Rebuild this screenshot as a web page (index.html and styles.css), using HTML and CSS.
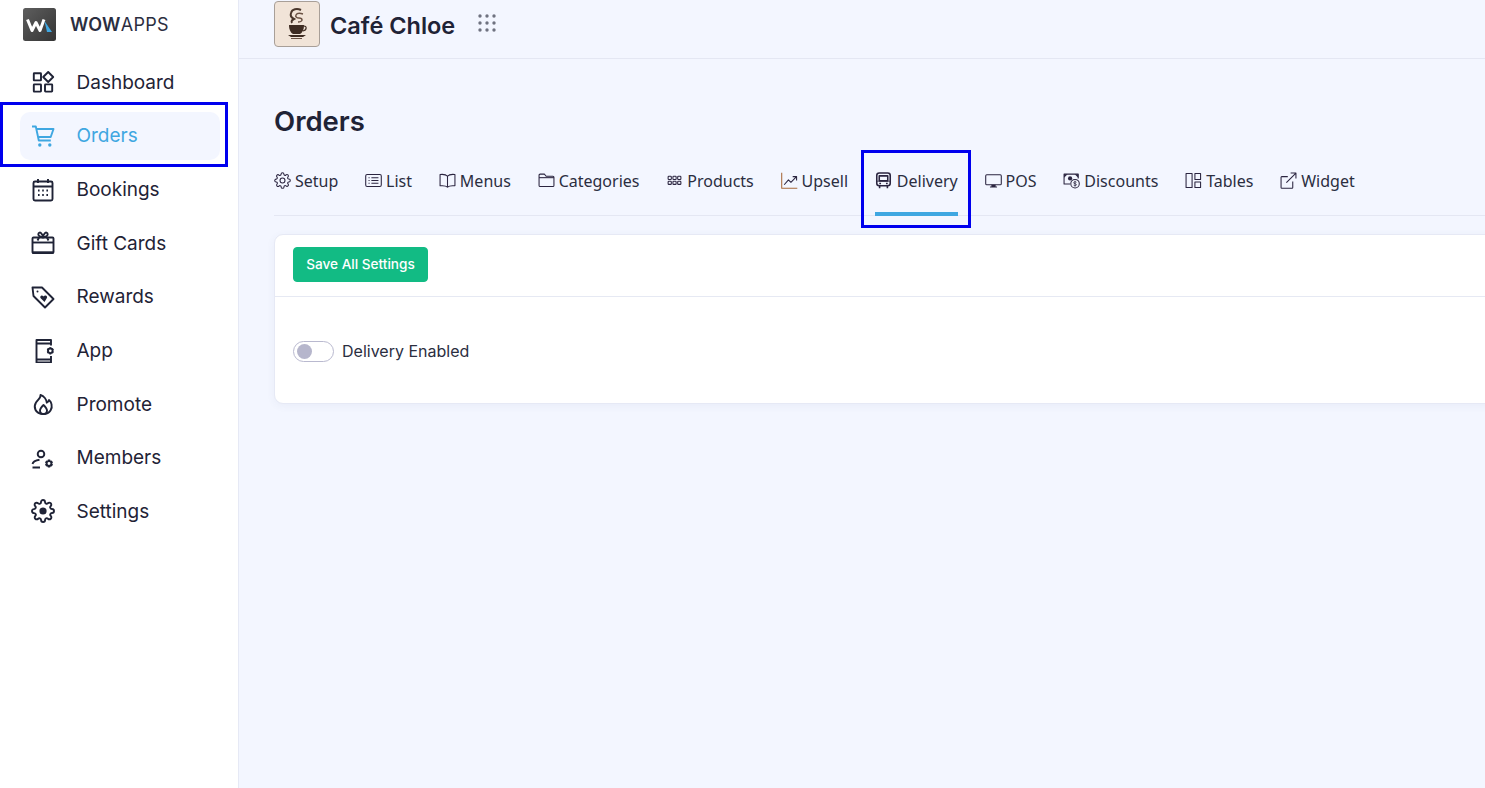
FILE: index.html
```html
<!DOCTYPE html>
<html lang="en">
<head>
<meta charset="utf-8">
<title>Orders - Delivery</title>
<link rel="stylesheet" href="styles.css">
</head>
<body>
<svg class="defs" width="0" height="0">
  <symbol id="gear" viewBox="0 0 24 24"><path d="M19.4 15a1.65 1.65 0 0 0 .33 1.82l.06.06a2 2 0 0 1 0 2.83 2 2 0 0 1-2.83 0l-.06-.06a1.65 1.65 0 0 0-1.82-.33 1.65 1.65 0 0 0-1 1.51V21a2 2 0 0 1-2 2 2 2 0 0 1-2-2v-.09A1.65 1.65 0 0 0 9 19.4a1.65 1.65 0 0 0-1.82.33l-.06.06a2 2 0 0 1-2.83 0 2 2 0 0 1 0-2.83l.06-.06a1.65 1.65 0 0 0 .33-1.82 1.65 1.65 0 0 0-1.51-1H3a2 2 0 0 1-2-2 2 2 0 0 1 2-2h.09A1.65 1.65 0 0 0 4.6 9a1.65 1.65 0 0 0-.33-1.82l-.06-.06a2 2 0 0 1 0-2.83 2 2 0 0 1 2.83 0l.06.06a1.65 1.65 0 0 0 1.82.33H9a1.65 1.65 0 0 0 1-1.51V3a2 2 0 0 1 2-2 2 2 0 0 1 2 2v.09a1.65 1.65 0 0 0 1 1.51 1.65 1.65 0 0 0 1.82-.33l.06-.06a2 2 0 0 1 2.83 0 2 2 0 0 1 0 2.83l-.06.06a1.65 1.65 0 0 0-.33 1.82V9a1.65 1.65 0 0 0 1.51 1H21a2 2 0 0 1 2 2 2 2 0 0 1-2 2h-.09a1.65 1.65 0 0 0-1.51 1z"/></symbol>
</svg>

<div class="app">
  <aside class="sidebar">
    <div class="brand">
      <svg class="logo" viewBox="0 0 33 33">
        <defs><linearGradient id="lg" x1="0" y1="0" x2="1" y2="1"><stop offset="0" stop-color="#5e5e5e"/><stop offset="1" stop-color="#343434"/></linearGradient></defs>
        <rect width="33" height="33" rx="2.500" fill="url(#lg)"/>
        <path d="M4.500 11.500L9 22.500l4-8 4 8 4-11" fill="none" stroke="#fff" stroke-width="3" stroke-linejoin="round"/>
        <path d="M21.500 13l7.500 11h-5z" fill="#3fa7e1"/>
      </svg>
      <span class="brand-name"><b>WOW</b>APPS</span>
    </div>
    <nav class="nav">
      <a class="nav-item">
        <svg class="nav-icon" viewBox="0 0 24 24"><rect x="2.800" y="3.200" width="7.200" height="7.200" rx=".5"/><path d="M17.200 2l5 5-5 5-5-5z"/><rect x="2.800" y="14.400" width="7.200" height="7.200" rx=".5"/><rect x="14" y="14.400" width="7.200" height="7.200" rx=".5"/></svg>
        <span>Dashboard</span>
      </a>
      <a class="nav-item active">
        <svg class="nav-icon" viewBox="0 0 24 24"><path d="M1 2.500h3.800l3 14h12"/><path d="M5.500 5h17l-2.800 8H7.300"/><circle class="fill" cx="8.800" cy="21" r="1.700"/><circle class="fill" cx="18.800" cy="21" r="1.700"/></svg>
        <span>Orders</span>
      </a>
      <a class="nav-item">
        <svg class="nav-icon" viewBox="0 0 24 24"><rect x="2.500" y="3.500" width="19" height="19" rx="1.500"/><path d="M2.500 8.500h19M7 1v4M17 1v4"/><path class="dots" d="M7 12.500h1.600M11.200 12.500h1.600M15.400 12.500H17M7 17h1.600M11.200 17h1.600M15.400 17H17"/></svg>
        <span>Bookings</span>
      </a>
      <a class="nav-item">
        <svg class="nav-icon" viewBox="0 0 24 24"><rect x="1.500" y="6.500" width="21" height="15.500" rx="1"/><path class="heavy" d="M1.500 21.500h21"/><path d="M1.500 11.500h21"/><path d="M12 6.500C9 6 6.500 4.500 7.500 2.500s4-.8 4.500 4c.5-4.800 3.500-6 4.500-4S15 6 12 6.500zM8 6.500l-1.500 3M16 6.500l1.500 3"/></svg>
        <span>Gift Cards</span>
      </a>
      <a class="nav-item">
        <svg class="nav-icon" viewBox="0 0 24 24"><path d="M1.500 2.500h9.500l11.500 11.500-8.500 8.500L2.500 11z"/><circle class="fill" cx="6.500" cy="6.500" r="1"/><path class="fill" d="M13.500 17l-3.800-3.800c-1.500-1.800.9-3.800 2.500-2.200l.5.500.5-.5c1.700-1.500 4 .8 2.400 2.400z"/></svg>
        <span>Rewards</span>
      </a>
      <a class="nav-item">
        <svg class="nav-icon" viewBox="0 0 24 24"><path d="M20 6.500V1H5.500v22.500H20V17"/><path d="M5.500 4.500H20M5.500 20.500H20"/><circle cx="19.300" cy="11.800" r="2.300"/><path d="M19.300 8.200v1.300M19.300 14.100v1.300M16.200 10l1.100.6M21.300 13l1.100.6M16.200 13.600l1.100-.6M21.300 10.600l1.100-.6"/></svg>
        <span>App</span>
      </a>
      <a class="nav-item">
        <svg class="nav-icon" viewBox="0 0 24 24"><path d="M9.500 3c.5 3-2.500 4.500-4.500 7.500C2.500 14.500 3.500 22 12.500 22c7 0 9-6 8-10-.4-1.800-1.500-3.300-2.500-4-.3 1.500-1 2.300-2.200 2.700C15.500 7.500 13 4 9.500 3z"/><path d="M12.500 13c-2 2-3.500 3.500-3.500 5.500 0 2 1.500 3.500 3.500 3.500s3.500-1.500 3.500-3.500c0-2-1.500-3.500-3.500-5.500z"/></svg>
        <span>Promote</span>
      </a>
      <a class="nav-item">
        <svg class="nav-icon" viewBox="0 0 24 24"><circle cx="10" cy="8" r="3.300"/><path d="M1.500 21.500H9M1.500 18c.5-2.500 3-3.800 7-4.300"/><circle cx="18" cy="17.500" r="2.400"/><path class="heavy" d="M18 13.500v1.500M18 20v1.500M14.600 15.500l1.300.8M20.100 18.700l1.300.8M14.600 19.500l1.300-.8M20.100 16.300l1.300-.8"/></svg>
        <span>Members</span>
      </a>
      <a class="nav-item">
        <svg class="nav-icon" viewBox="0 0 24 24"><use href="#gear"/><circle class="fill" cx="12" cy="12" r="3.600"/></svg>
        <span>Settings</span>
      </a>
    </nav>
  </aside>

  <main class="main">
    <header class="topbar">
      <div class="avatar">
        <svg class="avatar-art" viewBox="0 0 44 44">
          <path d="M26 8c-4-2-9-1-10 3-1 3 1 5 3 6-2 1-3 2-2 4" fill="none" stroke="#4a372c" stroke-width="2"/>
          <path d="M28 12c-3-1-6-1-7 1s1 3 3 3 3 1 3 2-2 2-4 2" fill="none" stroke="#6a5244" stroke-width="1.500"/>
          <path d="M14 23h15c0 5-2 8-4 9h-7c-2-1-4-4-4-9z" fill="#3e2c22"/>
          <path d="M29 24c3 0 3 4-1 5" fill="none" stroke="#3e2c22" stroke-width="1.200"/>
          <path d="M13 33h18l-3 2H16z" fill="#3e2c22"/>
          <path d="M16 36.500h11" stroke="#6a5244" stroke-width="1"/>
        </svg>
      </div>
      <h2 class="store-name">Café Chloe</h2>
      <svg class="grid-dots" viewBox="0 0 18 18"><circle cx="2" cy="2" r="1.700"/><circle cx="9" cy="2" r="1.700"/><circle cx="16" cy="2" r="1.700"/><circle cx="2" cy="9" r="1.700"/><circle cx="9" cy="9" r="1.700"/><circle cx="16" cy="9" r="1.700"/><circle cx="2" cy="16" r="1.700"/><circle cx="9" cy="16" r="1.700"/><circle cx="16" cy="16" r="1.700"/></svg>
    </header>

    <section class="content">
      <h1 class="page-title">Orders</h1>
      <div class="tabs">
        <a class="tab"><svg class="tab-icon" viewBox="0 0 24 24"><use href="#gear"/><circle cx="12" cy="12" r="3.500"/></svg><span>Setup</span></a>
        <a class="tab"><svg class="tab-icon" viewBox="0 0 24 24"><rect x="1" y="3.500" width="22" height="17" rx="2"/><path d="M5 8h1.500M9 8h10M5 12h1.500M9 12h10M5 16h1.500M9 16h10"/></svg><span>List</span></a>
        <a class="tab"><svg class="tab-icon" viewBox="0 0 24 24"><path d="M12 6C10 3.500 6 3 1.500 3.500v16C6 19 10 19.500 12 21.500c2-2 6-2.500 10.500-2V3.500C18 3 14 3.500 12 6zM12 6v15.500"/></svg><span>Menus</span></a>
        <a class="tab"><svg class="tab-icon" viewBox="0 0 24 24"><path d="M1.500 6V4.500A1.500 1.500 0 0 1 3 3h6l2.500 3H21a1.500 1.500 0 0 1 1.500 1.500V19a1.500 1.500 0 0 1-1.500 1.500H3A1.500 1.500 0 0 1 1.500 19z"/><path d="M1.500 8h21"/></svg><span>Categories</span></a>
        <a class="tab"><svg class="tab-icon" viewBox="0 0 24 24"><rect x="3" y="6" width="4.500" height="4.500" rx="1"/><rect x="9.800" y="6" width="4.500" height="4.500" rx="1"/><rect x="16.500" y="6" width="4.500" height="4.500" rx="1"/><rect x="3" y="13" width="4.500" height="4.500" rx="1"/><rect x="9.800" y="13" width="4.500" height="4.500" rx="1"/><rect x="16.500" y="13" width="4.500" height="4.500" rx="1"/></svg><span>Products</span></a>
        <a class="tab"><svg class="tab-icon" viewBox="0 0 24 24"><path class="warm" d="M1 1v22h22"/><path d="M4.500 18l6-7 3.500 3.500L21.500 7M16.500 6.500h5.500V12"/></svg><span>Upsell</span></a>
        <a class="tab current"><svg class="tab-icon strong" viewBox="0 0 24 24"><rect x="2.500" y="1.500" width="19" height="18" rx="3.500"/><path d="M6 5.500h12v7H6z"/><path class="thin" d="M2.500 13h19"/><path d="M6 16.300h2.500M15.500 16.300H18M6.500 19.500V23M17.500 19.500V23"/></svg><span>Delivery</span></a>
        <a class="tab"><svg class="tab-icon" viewBox="0 0 24 24"><rect x="1" y="4" width="22" height="14" rx="1.500"/><path class="fill" d="M9 18h6v2.500H9zM7 20.500h10V22H7z"/></svg><span>POS</span></a>
        <a class="tab"><svg class="tab-icon" viewBox="0 0 24 24"><path d="M10 17H1.500V3h20v6"/><circle class="fill" cx="10" cy="9" r="3"/><path class="fill" d="M1.500 3h5l-5 5zM21.500 3h-5l5 5z"/><circle cx="17" cy="16.500" r="6"/><path class="thin" d="M19 14.500c-1-1-4-1-4 .8s4 1 4 2.600-3 1.800-4 .7M17 12.500v8"/></svg><span>Discounts</span></a>
        <a class="tab"><svg class="tab-icon" viewBox="0 0 24 24"><rect x="1.500" y="2" width="8.500" height="20"/><rect x="14" y="2" width="8" height="8.500"/><rect x="14" y="14" width="8" height="8"/></svg><span>Tables</span></a>
        <a class="tab"><svg class="tab-icon" viewBox="0 0 24 24"><path d="M18 13.500V22a1 1 0 0 1-1 1H2.500a1 1 0 0 1-1-1V7.500a1 1 0 0 1 1-1H11"/><path d="M9 15L22.500 1.500M15 1.500h7.500V9"/></svg><span>Widget</span></a>
      </div>

      <div class="card">
        <div class="card-head"><button class="btn-save">Save All Settings</button></div>
        <div class="card-body">
          <label class="switch-row"><span class="switch"><span class="knob"></span></span><span class="switch-label">Delivery Enabled</span></label>
        </div>
      </div>
    </section>
  </main>
</div>

<div class="mark mark-nav"></div>
<div class="mark mark-tab"></div>
</body>
</html>
```

FILE: styles.css
```css
* { box-sizing: border-box; }
html, body { margin: 0; height: 100%; overflow: hidden; }
body {
  font-family: "Inter", "Noto Sans", sans-serif;
  color: #1f2336;
  background: #f3f6ff;
}
.defs { position: absolute; }
.app { display: flex; height: 788px; width: 1485px; overflow: hidden; }

.sidebar {
  flex: 0 0 239px;
  background: #fff;
  border-right: 1px solid #e6e9f5;
  padding: 8px 18px 0 20px;
}
.brand { display: flex; align-items: center; height: 33px; padding-left: 3px; gap: 14px; }
.logo { width: 33px; height: 33px; flex: none; }
.brand-name { font-size: 18px; letter-spacing: .25px; color: #2b2e3f; font-weight: 400; margin-top: -1px; }
.brand-name b { font-weight: 600; }

.nav { display: flex; flex-direction: column; gap: 6px; margin-top: 17.4px; }
.nav-item {
  display: flex;
  align-items: center;
  gap: 22px;
  height: 47.67px;
  padding-left: 11px;
  border-radius: 10px;
  font-size: 19px;
  color: #1f2336;
}
.nav-item span { margin-left: -.5px; }
.nav-item.active { background: #f3f6ff; color: #3fa7e1; }
.nav-icon { width: 24px; height: 24px; flex: none; fill: none; stroke: currentColor; stroke-width: 1.900; stroke-linejoin: round; }
.nav-icon .fill { fill: currentColor; stroke: none; }
.nav-icon .dots { stroke-width: 1.800; }
.nav-icon .heavy { stroke-width: 2.400; }

.main { flex: 1; min-width: 0; overflow: hidden; }
.topbar {
  display: flex;
  align-items: center;
  height: 59px;
  padding: 0 0 11px 35px;
  border-bottom: 1px solid #e4e7f3;
}
.avatar {
  width: 46px;
  height: 46px;
  flex: none;
  margin-top: 1px;
  background: #f1e4d8;
  border: 1px solid #a89f98;
  border-radius: 4px;
}
.avatar-art { display: block; width: 44px; height: 44px; }
.store-name { margin: 4px 0 0 10px; font-size: 23.500px; font-weight: 600; color: #1f2336; }
.grid-dots { width: 18px; height: 18px; margin: -1px 0 0 23px; fill: #6f7280; }

.content { padding: 46px 0 0 35px; }
.page-title { margin: 0; font-size: 27.500px; line-height: 32px; font-weight: 600; color: #1f2336; }

.tabs {
  display: flex;
  gap: 26.8px;
  height: 63px;
  margin-top: 16px;
  padding-top: 16px;
  border-bottom: 1px solid #e4e7f3;
  width: 1300px;
}
.tab {
  display: flex;
  align-items: flex-start;
  gap: 4px;
  height: 47px;
  line-height: 24px;
  color: #2b2e3f;
  border-bottom: 4px solid transparent;
  flex: none;
}
.tab span { font-family: "Noto Sans", sans-serif; font-size: 16px; }
.tab.current { gap: 5px; border-bottom-color: #3fa7e1; }
.tab-icon { width: 17px; height: 17px; margin-top: 3px; flex: none; fill: none; stroke: #2b2540; stroke-width: 1.500; stroke-linejoin: round; }
.tab-icon .fill { fill: #2b2540; stroke: none; }
.tab-icon .thin { stroke-width: 1.100; }
.tab-icon .warm { stroke: #a8683a; }
.tab-icon.strong { stroke-width: 2.200; }

.card {
  width: 1300px;
  height: 170px;
  margin-top: 18px;
  background: #fff;
  border: 1px solid #e6e9f5;
  border-radius: 9px;
  box-shadow: 0 2px 8px rgba(70, 80, 140, .06);
}
.card-head { height: 62px; padding: 12px 18px 0; border-bottom: 1px solid #e6e9f3; }
.btn-save {
  display: block;
  width: 135px;
  height: 35px;
  padding: 0 0 2px;
  border: 1px solid #12bb84;
  border-radius: 4px;
  background: #12bb84;
  color: #fff;
  font-family: inherit;
  font-size: 13.600px;
  font-weight: 500;
}
.card-body { padding: 44px 18px 0; }
.switch-row { display: flex; align-items: center; gap: 8px; font-size: 16px; color: #2b2e3f; height: 21px; }
.switch-label { margin-top: -2px; }
.switch { display: flex; align-items: center; width: 41px; height: 21px; padding-left: 3px; border: 1px solid #b9b9cf; border-radius: 11px; background: #fff; }
.knob { width: 15px; height: 15px; border-radius: 50%; background: #b6b6cc; }

.mark { position: absolute; border: 3px solid #0000ee; }
.mark-nav { left: 0; top: 102px; width: 228px; height: 65px; }
.mark-tab { left: 861px; top: 150px; width: 110px; height: 78px; }
```
